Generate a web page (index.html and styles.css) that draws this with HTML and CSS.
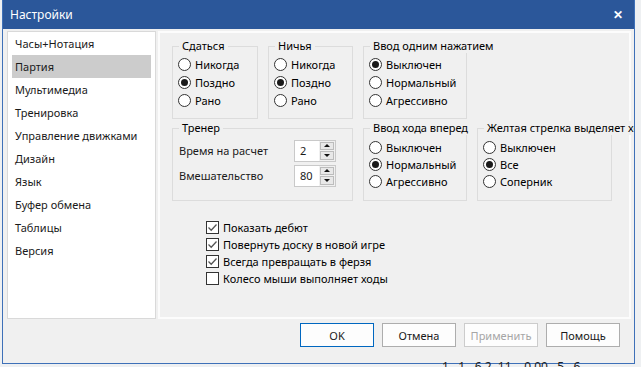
FILE: index.html
```html
<!DOCTYPE html>
<html lang="ru">
<head>
  <meta charset="UTF-8">
  <title>Настройки</title>
  <link rel="stylesheet" href="styles.css">
</head>
<body>

<div class="dialog">
  <div class="titlebar">
    <span class="title">Настройки</span>
    <span class="close">✕</span>
  </div>

  <div class="main">
    <ul class="pages">
      <li>Часы+Нотация</li>
      <li class="active">Партия</li>
      <li>Мультимедиа</li>
      <li>Тренировка</li>
      <li>Управление движками</li>
      <li>Дизайн</li>
      <li>Язык</li>
      <li>Буфер обмена</li>
      <li>Таблицы</li>
      <li>Версия</li>
    </ul>

    <div class="panel">
      <div class="groups">
        <div class="group">
          <span class="caption">Сдаться</span>
          <div class="opt"><span class="radio"></span>Никогда</div>
          <div class="opt"><span class="radio on"></span>Поздно</div>
          <div class="opt"><span class="radio"></span>Рано</div>
        </div>
        <div class="group">
          <span class="caption">Ничья</span>
          <div class="opt"><span class="radio"></span>Никогда</div>
          <div class="opt"><span class="radio on"></span>Поздно</div>
          <div class="opt"><span class="radio"></span>Рано</div>
        </div>
        <div class="group">
          <span class="caption">Ввод одним нажатием</span>
          <div class="opt"><span class="radio on"></span>Выключен</div>
          <div class="opt"><span class="radio"></span>Нормальный</div>
          <div class="opt"><span class="radio"></span>Агрессивно</div>
        </div>
        <div></div>

        <div class="group trainer">
          <span class="caption">Тренер</span>
          <div class="field">
            <span>Время на расчет</span>
            <div class="spin"><span class="val">2</span><span class="arrows"><i class="up"></i><i class="down"></i></span></div>
          </div>
          <div class="field">
            <span>Вмешательство</span>
            <div class="spin"><span class="val">80</span><span class="arrows"><i class="up"></i><i class="down"></i></span></div>
          </div>
        </div>
        <div class="group low">
          <span class="caption">Ввод хода вперед</span>
          <div class="opt"><span class="radio"></span>Выключен</div>
          <div class="opt"><span class="radio on"></span>Нормальный</div>
          <div class="opt"><span class="radio"></span>Агрессивно</div>
        </div>
        <div class="group low">
          <span class="caption">Желтая стрелка выделяет ходы</span>
          <div class="opt"><span class="radio"></span>Выключен</div>
          <div class="opt"><span class="radio on"></span>Все</div>
          <div class="opt"><span class="radio"></span>Соперник</div>
        </div>
      </div>

      <div class="checks">
        <div class="check"><span class="box"><svg viewBox="0 0 11 11"><path d="M1.5 5.5 L4.2 8.2 L9.5 2.5" /></svg></span>Показать дебют</div>
        <div class="check"><span class="box"><svg viewBox="0 0 11 11"><path d="M1.5 5.5 L4.2 8.2 L9.5 2.5" /></svg></span>Повернуть доску в новой игре</div>
        <div class="check"><span class="box"><svg viewBox="0 0 11 11"><path d="M1.5 5.5 L4.2 8.2 L9.5 2.5" /></svg></span>Всегда превращать в ферзя</div>
        <div class="check"><span class="box"></span>Колесо мыши выполняет ходы</div>
      </div>
    </div>
  </div>

  <div class="footer">
    <button class="default">OK</button>
    <button>Отмена</button>
    <button disabled>Применить</button>
    <button>Помощь</button>
  </div>
</div>

<div class="behind">1. &nbsp;1. &nbsp;6.2 &nbsp;11. &nbsp;&nbsp;0.00 &nbsp;&nbsp;5. &nbsp;6</div>

</body>
</html>
```

FILE: styles.css
```css
body {
  margin: 0;
  height: 367px;
  overflow: hidden;
  background: #eef0f2;
  font-family: 'Noto Sans', sans-serif;
  font-size: 11px;
  color: #000;
}
.dialog {
  width: 633px;
  height: 364px;
  margin-left: 2px;
  box-sizing: border-box;
  border: 1px solid #3e70b8;
  border-top: none;
  background: #f0f0f0;
  display: flex;
  flex-direction: column;
  overflow: hidden;
}
.titlebar {
  height: 28px;
  flex-shrink: 0;
  background: #2b579a;
  color: white;
  display: flex;
  align-items: center;
  justify-content: space-between;
  padding: 0 10px 1px 8px;
  margin: 0 -1px;
  font-size: 12px;
}
.close {
  font-size: 12px;
  font-weight: bold;
  margin-right: 2px;
}
.main {
  display: flex;
  gap: 2px;
  padding: 2px 3px 0 4px;
  height: 288px;
  flex-shrink: 0;
}
.pages {
  list-style: none;
  margin: 0;
  padding: 0 4px;
  width: 149px;
  flex-shrink: 0;
  box-sizing: border-box;
  background: white;
  border: 1px solid #d9d9d9;
}
.pages li {
  height: 23px;
  line-height: 23px;
  padding-left: 3px;
  white-space: nowrap;
  color: #1a1a1a;
}
.pages li.active {
  background: #cccccc;
}
.panel {
  flex: 1;
  border: 2px solid #fcfcfc;
  background: #f0f0f0;
  padding: 13px 0 0 12px;
}
.groups {
  display: grid;
  grid-template-columns: 86px 85px 104px 135px;
  grid-template-rows: 73px 73px;
  column-gap: 10px;
  row-gap: 9px;
}
.group {
  position: relative;
  padding: 8px 5px 0 5px;
  border: 1px solid #dcdcdc;
}
.caption {
  position: absolute;
  top: -8px;
  left: 6px;
  padding: 0 3px;
  line-height: 14px;
  background: #f0f0f0;
  white-space: nowrap;
}
.group.low {
  padding-top: 10px;
}
.opt {
  height: 18px;
  display: flex;
  align-items: center;
  gap: 4px;
  white-space: nowrap;
}
.low .opt {
  height: 17px;
}
.radio {
  width: 13px;
  height: 13px;
  box-sizing: border-box;
  border: 1px solid #333;
  border-radius: 50%;
  background: white;
  display: flex;
  align-items: center;
  justify-content: center;
  flex-shrink: 0;
}
.radio.on::after {
  content: "";
  width: 7px;
  height: 7px;
  border-radius: 50%;
  background: #1a1a1a;
}
.trainer {
  grid-column: span 2;
  padding: 9px 16px 0 6px;
}
.field {
  display: flex;
  justify-content: space-between;
  align-items: center;
  height: 25px;
  color: #1a1a1a;
}
.spin {
  display: flex;
  width: 42px;
  height: 22px;
  box-sizing: border-box;
  border: 1px solid #c9c9c9;
  background: white;
}
.spin .val {
  flex: 1;
  padding-left: 5px;
  line-height: 20px;
}
.arrows {
  width: 16px;
  display: flex;
  flex-direction: column;
  gap: 1px;
  padding: 1px;
  box-sizing: border-box;
  background: #f0f0f0;
}
.arrows i {
  flex: 1;
  border: 1px solid #bcbcbc;
  background: #e8e8e8;
  display: flex;
  align-items: center;
  justify-content: center;
}
.arrows i::after {
  content: "";
  border-left: 3px solid transparent;
  border-right: 3px solid transparent;
}
.arrows .up::after {
  border-bottom: 3px solid #111;
}
.arrows .down::after {
  border-top: 3px solid #111;
}
.checks {
  margin: 18px 0 0 34px;
}
.check {
  height: 17px;
  display: flex;
  align-items: center;
  gap: 4px;
  white-space: nowrap;
}
.box {
  width: 13px;
  height: 13px;
  box-sizing: border-box;
  border: 1px solid #333;
  background: white;
  display: flex;
}
.box svg {
  width: 11px;
  height: 11px;
  fill: none;
  stroke: #555;
  stroke-width: 1.3;
}
.footer {
  display: flex;
  justify-content: flex-end;
  gap: 8px;
  padding: 4px 14px 0 0;
}
button {
  width: 74px;
  height: 24px;
  font-family: inherit;
  font-size: 11px;
  background: #fdfdfd;
  border: 1px solid #adadad;
  color: #1a1a1a;
  padding: 0;
}
button.default {
  border-color: #0067c0;
}
button:disabled {
  color: #a6a6a6;
  border-color: #cccccc;
}
.behind {
  margin: -4px 0 0 442px;
  font-size: 12px;
  color: #222;
  line-height: 14px;
  white-space: nowrap;
}
```
